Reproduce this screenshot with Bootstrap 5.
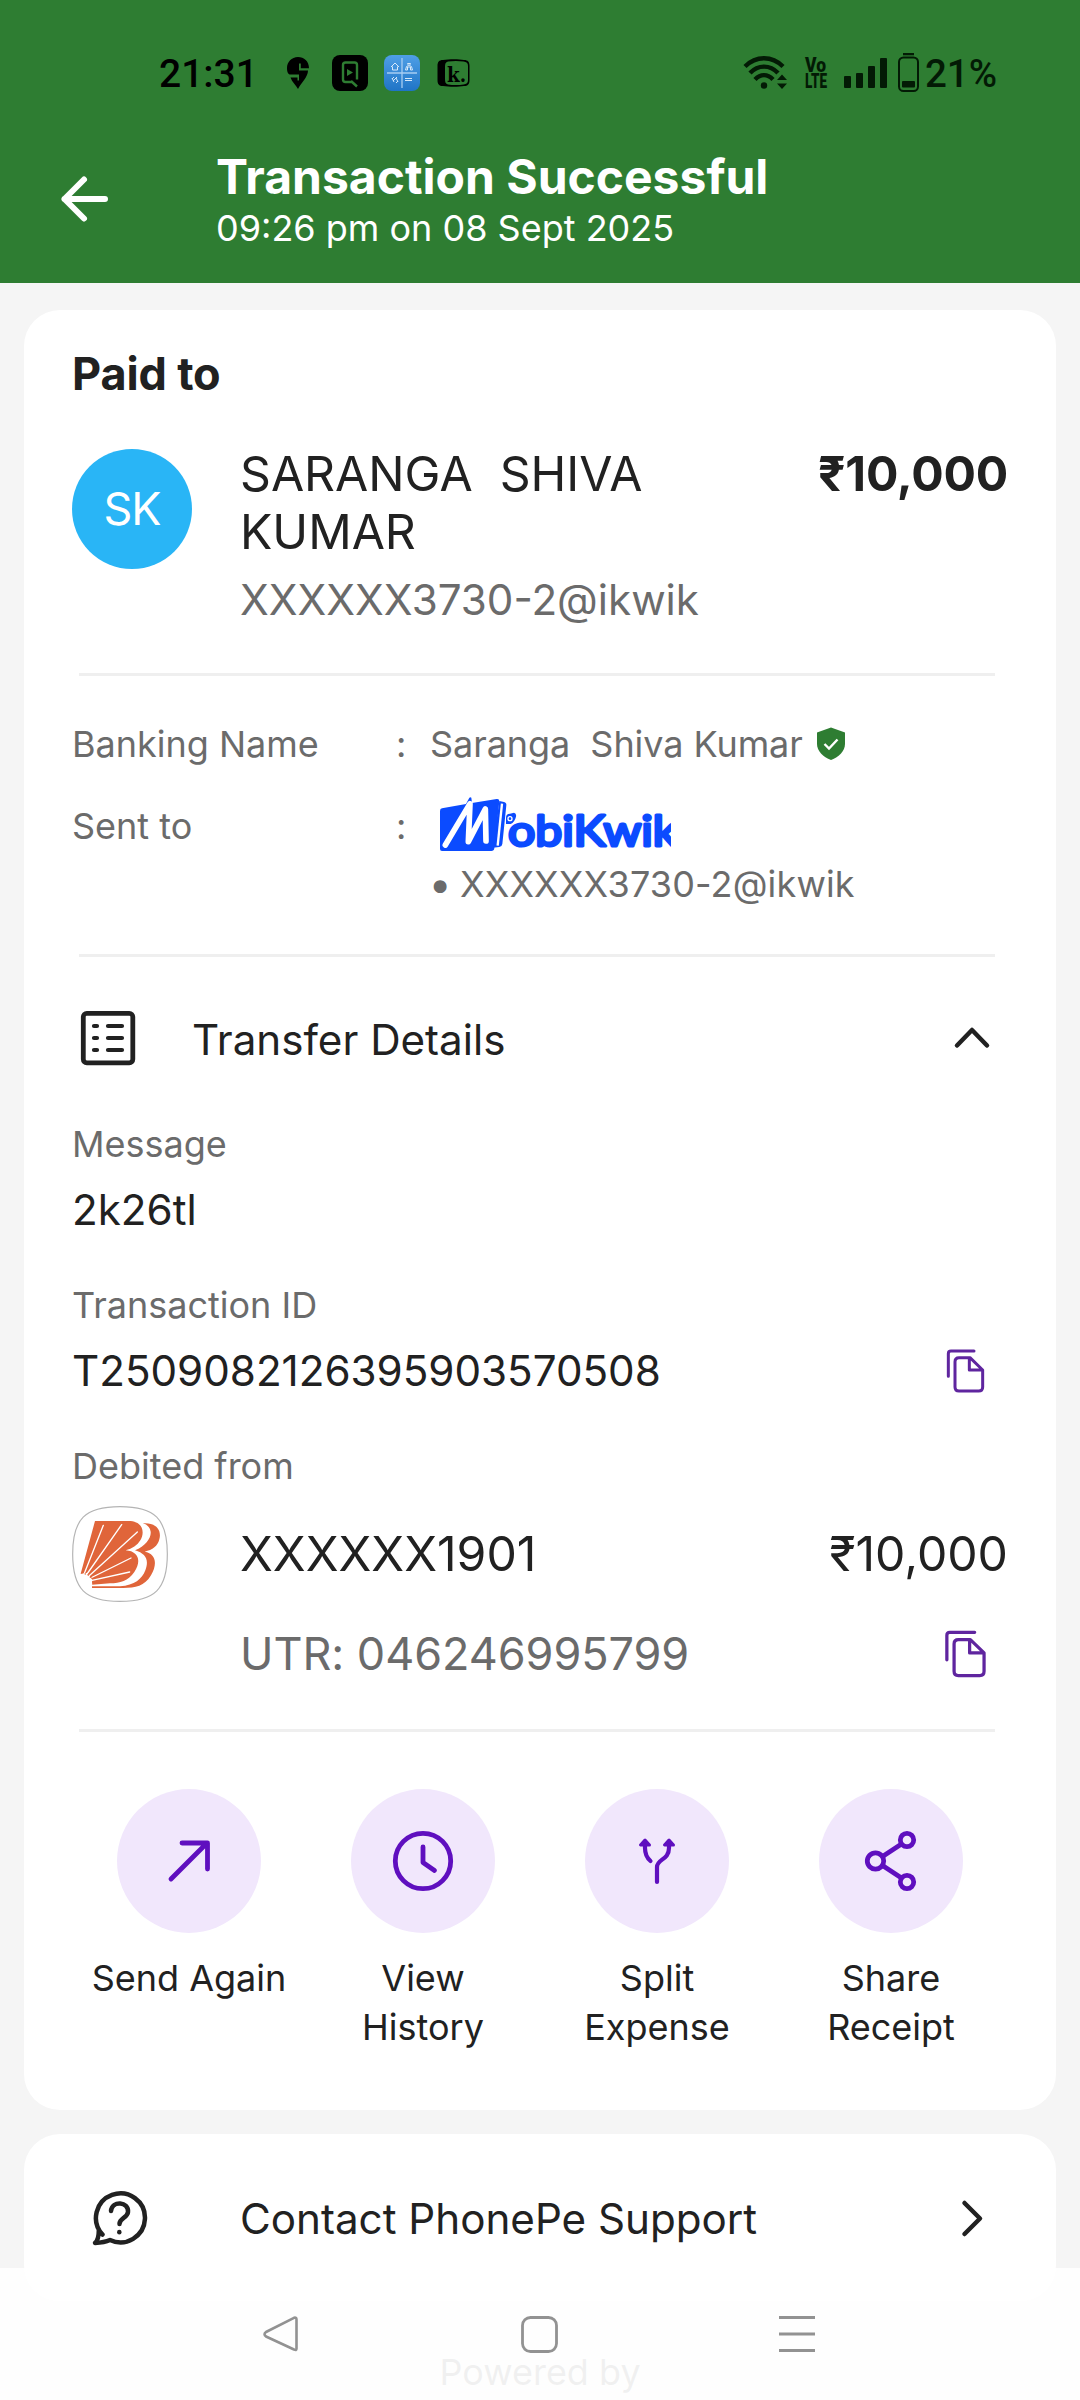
<!doctype html>
<html lang="en">
<head>
<meta charset="utf-8">
<meta name="viewport" content="width=device-width, initial-scale=1">
<title>Transaction Successful</title>
<link href="https://cdn.jsdelivr.net/npm/bootstrap@5.3.0/dist/css/bootstrap.min.css" rel="stylesheet">
<style>
  body { font-family: Inter, "Noto Sans", sans-serif; background: #f5f5f5; color: #212121; height: 2400px; overflow: hidden; }
  svg { display: block; flex: none; }
  .ink-muted { color: #6b6b6b; }
  .app-head { background: #2e7d32; height: 283px; }
  .status-bar { height: 148px; padding: 0 83px 0 159px; font: 500 39px/46px Roboto, sans-serif; color: #000; }
  .status-left svg { margin-bottom: 3px; }
  .status-right { color: #031a05; }
  .status-right svg { margin-bottom: 3px; }
  .head-row { padding-left: 60px; }
  .head-title { font-size: 48px; line-height: 58px; margin-left: 108px; }
  .fs-s { font-size: 36px; line-height: 44px; }
  .fs-m { font-size: 42.150px; line-height: 50px; }
  .fs-l { font-size: 45px; line-height: 54px; }
  .fs-xl { font-size: 48.150px; line-height: 58px; }
  .panel { border: 0; border-radius: 36px; margin: 0 24px; background: #fff; color: inherit; }
  .panel-main { margin-top: 27px; padding: 37px 48px 0; height: 1800px; }
  .rule { height: 3px; background: #efefef; margin: 0 13px 0 7px; flex: none; }
  .avatar { width: 120px; height: 120px; background: #29b5f6; margin-top: 4px; letter-spacing: -1px; flex: none; }
  .col-lead { width: 168px; flex: none; }
  .col-label { width: 324px; flex: none; }
  .col-colon { width: 34px; flex: none; }
  .action-item { width: 234px; flex: none; }
  .action-dot { width: 144px; height: 144px; background: #f1e7fc; color: #5f0fbf; margin-bottom: 21px; }
  .action-text { line-height: 49px; }
  .copy-ico { color: #5f259f; }
  .panel-help { margin-top: 24px; height: 167px; padding: 0 24px 0 58px; }
  .nav-keys { height: 132px; background: rgba(255,255,255,.9); color: #929292; padding: 48px 265px 0 263px; }
</style>
</head>
<body>
<header class="app-head text-white">
  <div class="status-bar d-flex align-items-center justify-content-between">
    <div class="status-left d-flex align-items-center">
      <span style="width:128px">21:31</span>
      <svg width="22" height="32" viewBox="0 0 22 32" fill="#000"><path d="M11 0C4.500 0 0 5 0 11c0 4 1 6.500 3.500 6.500H12v6H10.500v-3H3.500C5 25 9 28 11 32c3-6 10-12 10-18.500H12V6.500h1.800v4.700H22C22 4 17 0 11 0z"/></svg>
      <svg style="margin-left:23px" width="36" height="36" viewBox="0 0 36 36"><rect width="36" height="36" rx="8"/><path d="M20 27h-6.500a2.500 2.500 0 0 1-2.500-2.500V10a2.500 2.500 0 0 1 2.500-2.500h9A2.500 2.500 0 0 1 25 10v14.500M19 26l6 5.500" fill="none" stroke="#2e7d32" stroke-width="2.400"/><path d="M15 14l6 3.500-6 3.500z" fill="#2e7d32"/></svg>
      <svg style="margin-left:16px" width="36" height="36" viewBox="0 0 36 36"><defs><linearGradient id="gb" x2="0" y2="1"><stop stop-color="#4f9fe6"/><stop offset="1" stop-color="#1f74c6"/></linearGradient></defs><rect width="36" height="36" rx="8" fill="url(#gb)"/><path d="M3 18h30M18 3v30" stroke="#a7cdf2" stroke-width="1.300"/><g fill="none" stroke="#d5e8fa" stroke-width="1"><path d="M7 12l4-4 4 4M8.500 11.500V15h5v-3.500M21.500 15l1-3.500 2-1-1-2h3l-1 2 2 1 1 3.500h-2v-3h-3v3z"/><path d="M8 23l2 4M12 23l2 4M10 22l-2 2M14 26l-2 2M9 26l4-4M21 23.500h7M21 25.500h7"/></g></svg>
      <svg style="margin-left:17px" width="33" height="28" viewBox="0 0 33 28"><path fill-rule="evenodd" d="M6 1C12 0 22 0 27 1c4 0 5.500 2 5.500 6v14c0 4-1.500 6-5.500 6-5 1-15 1-21 0-4 0-5.500-2-5.500-6V7C.5 3 2 1 6 1zm5 1.500C8.500 3 8 5 8 8v12c0 3 .5 5 3 5.500 5 .7 11 .7 15.500 0 3-.3 4.500-1.500 4.500-4.500V7c0-3-1.500-4.200-4.500-4.500-4.500-.7-10.500-.7-15.500 0z"/><text x="10" y="22.500" font-family="DejaVu Serif, serif" font-weight="700" font-size="21" textLength="19" lengthAdjust="spacingAndGlyphs">k.</text></svg>
    </div>
    <div class="status-right d-flex align-items-center">
      <svg width="46" height="36" viewBox="0 0 46 36"><g fill="none" stroke="currentColor" stroke-width="4.400"><path d="M2 11.500C13 .5 29 .5 40 11.500"/><path d="M7 18C15 9.500 27 9.500 35 18"/><path d="M12 24.500c5.500-5.800 12.500-5.800 18 0"/></g><circle cx="21" cy="30.500" r="3.200" fill="currentColor"/><path d="M34 25l5-5.500 5 5.500zM34 28.500l5 5.500 5-5.500z" fill="currentColor"/></svg>
      <svg style="margin-left:15px" width="24" height="32" viewBox="0 0 24 32" overflow="visible" font-family="Roboto, sans-serif" font-weight="900" font-size="20" fill="currentColor"><text x="1" y="15" textLength="21" lengthAdjust="spacingAndGlyphs">Vo</text><text x="1" y="31" textLength="22" lengthAdjust="spacingAndGlyphs">LTE</text></svg>
      <svg style="margin-left:16px" width="44" height="32" viewBox="0 0 44 32" fill="currentColor"><rect y="19" width="7" height="12" rx="1"/><rect x="12" y="16" width="7" height="15" rx="1"/><rect x="24" y="9" width="7" height="22" rx="1"/><rect x="36" y="1" width="7" height="30" rx="1"/></svg>
      <svg style="margin-left:10px;margin-right:5px" width="22" height="41" viewBox="0 0 22 41"><rect x="5" y="1" width="11" height="2.300" fill="currentColor"/><rect x="1" y="5.500" width="19" height="33.500" rx="4.500" fill="none" stroke="currentColor" stroke-width="2"/><rect x="4" y="29" width="13" height="6.500" rx="1" fill="currentColor"/></svg>
      <span style="font-size:38.500px">21%</span>
    </div>
  </div>
  <div class="head-row d-flex align-items-center">
    <svg width="48" height="48" viewBox="0 0 48 48" fill="none" stroke="#fff" stroke-width="6" stroke-linecap="round" stroke-linejoin="round"><path d="M45 24H4.500M24 4.500L4.500 24 24 43.500"/></svg>
    <div class="head-title"><div class="fw-bold">Transaction Successful</div><div class="fs-s">09:26 pm on 08 Sept 2025</div></div>
  </div>
</header>

<main>
  <section class="card panel panel-main">
    <div class="fs-l fw-bold" style="letter-spacing:-.15px">Paid to</div>
    <div class="d-flex" style="margin-top:44px">
      <div class="col-lead"><div class="avatar rounded-circle text-white fs-l d-flex align-items-center justify-content-center">SK</div></div>
      <div class="flex-grow-1">
        <div class="fs-xl">SARANGA&nbsp; SHIVA<br>KUMAR</div>
        <div class="fs-m ink-muted" style="margin-top:14px">XXXXXX3730-2@ikwik</div>
      </div>
      <div class="fs-xl fw-bold" style="letter-spacing:-.2px">₹10,000</div>
    </div>
    <div class="rule" style="margin-top:48px"></div>

    <div class="d-flex fs-s ink-muted" style="margin-top:46px">
      <div class="col-label">Banking Name</div><div class="col-colon">:</div>
      <div class="d-flex align-items-center" style="letter-spacing:-.06px">Saranga&nbsp; Shiva Kumar
        <svg style="margin-left:13px" width="30" height="34" viewBox="0 0 30 34"><path d="M15 .5L29 5.500V17c0 7-6 13-14 16C7 30 1 24 1 17V5.500z" fill="#2e7d32"/><path d="M8.500 17l4.500 4.500 8.500-9" fill="none" stroke="#fff" stroke-width="2.400"/></svg>
      </div>
    </div>
    <div class="d-flex fs-s ink-muted" style="margin-top:31px">
      <div class="col-label" style="padding-top:7px">Sent to</div><div class="col-colon" style="padding-top:7px">:</div>
      <div>
        <svg width="241" height="65" viewBox="0 36 723 195">
          <g fill="#0b4bff"><path d="M208 48l14 3q8 2 7 10l-12 116q-1 8-9 9l-20 2z"/><path d="M228 98q0-12 12-12l12-3q8 2 6 12-4 16-16 22h-14z"/><path d="M36 70l72-13 10-19q4-3 6 0l2 16 74-12q8-1 8 7l-15 141q-1 8-9 8H36q-6 0-6-6V78q0-7 6-8z"/></g>
          <path d="M216 56l-13 126" stroke="#fff" stroke-width="7"/>
          <path d="M46 180L120 56l-5 114 51-98 2 96" fill="none" stroke="#fff" stroke-width="17" stroke-linecap="round" stroke-linejoin="round"/>
          <circle cx="240" cy="101" r="6" fill="none" stroke="#fff" stroke-width="4"/>
          <text x="234" y="184" font-family="Lato, sans-serif" font-weight="400" font-size="127" fill="#0b4bff" stroke="#0b4bff" stroke-width="9" stroke-linejoin="round" textLength="508" lengthAdjust="spacingAndGlyphs">obiKwik</text>
        </svg>
        <div style="letter-spacing:.15px"><span class="d-inline-block" style="width:30px;-webkit-text-stroke:1.500px #6b6b6b">•</span>XXXXXX3730-2@ikwik</div>
      </div>
    </div>
    <div class="rule" style="margin-top:48px"></div>

    <div class="d-flex align-items-center" style="margin-top:45px;height:72px">
      <svg width="72" height="72" viewBox="0 0 72 72" fill="none" stroke="currentColor" stroke-width="4.800"><rect x="11.300" y="11.300" width="49.500" height="49.500" rx="3.500"/><path stroke-width="4.200" stroke-linecap="round" d="M22 24h3M22 36h3M22 48h3M36 24h14M36 36h14M36 48h14"/></svg>
      <div class="fs-m flex-grow-1" style="padding:3px 0 0 48px">Transfer Details</div>
      <svg style="margin:0 17px 2px 0" width="38" height="24" viewBox="0 0 38 24" fill="none" stroke="currentColor" stroke-width="4.500" stroke-linecap="round" stroke-linejoin="round"><path d="M4 20.500L19 5l15 15.500"/></svg>
    </div>

    <div class="fs-s ink-muted" style="margin-top:48px">Message</div>
    <div class="fs-m" style="margin-top:19px">2k26tl</div>

    <div class="fs-s ink-muted" style="margin-top:48px">Transaction ID</div>
    <div class="fs-m d-flex justify-content-between align-items-center" style="margin-top:19px"><span>T2509082126395903570508</span>
      <svg class="copy-ico" style="margin-right:18px" width="48" height="48" viewBox="36 50 144 144" fill="none" stroke="currentColor" stroke-width="9" stroke-linejoin="round" stroke-linecap="round"><path d="M55 138V70q0-8 8-8h69M87 82h33l38 37v51q0 12-12 12H87q-12 0-12-12V94q0-12 12-12zM118 84v35h38"/></svg>
    </div>

    <div class="fs-s ink-muted" style="margin-top:48px">Debited from</div>
    <div class="d-flex align-items-center fs-xl" style="margin-top:18px">
      <div class="col-lead">
        <svg width="96" height="96" viewBox="36 47 288 288">
          <path d="M180 49C285 49 322 86 322 191S285 333 180 333 38 296 38 191 75 49 180 49z" fill="#fff" stroke="#b4b4b4" stroke-width="3.500"/>
          <g fill="#e0653a"><path d="M105 92H205c45 0 50 35 36 58-9 15-24 25-44 30 39 3 48 32 26 65-18 26-43 34-73 34l-54 4v-16L62 250z"/><path d="M248 99c38-3 58 18 50 48-5 20-20 32-44 37 34 6 39 36 19 71-19 33-47 38-83 38H96v-5h84c44-3 66-22 76-48 12-32 1-50-31-60 32-14 49-37 47-56-2-13-10-21-24-25z"/></g>
          <g stroke="#fff" stroke-linecap="round" fill="#fff"><path stroke-width="4" d="M72 252L130 105M79 254L185 103M86 258L232 125M92 263l121-60M96 270l113-25"/><path stroke="none" d="M62 251l20-4 14 22 1 14-20 2z"/></g>
          <path d="M64 248l3-8 3 8zM96 274l60-9-58 15z" fill="#e0653a"/>
          <path d="M73 252l3-6 2 7zM81 254l5-5 1 8zM88 261l8-5-2 8z" fill="#e0653a"/>
        </svg>
      </div>
      <span class="flex-grow-1">XXXXXX1901</span><span>₹10,000</span>
    </div>
    <div class="fs-l ink-muted d-flex justify-content-between align-items-center" style="margin:25px 0 0 168px"><span style="letter-spacing:-.06px">UTR: 046246995799</span>
      <svg class="copy-ico" style="margin-right:16px" width="52" height="52" viewBox="36 50 144 144" fill="none" stroke="currentColor" stroke-width="9" stroke-linejoin="round" stroke-linecap="round"><path d="M55 138V70q0-8 8-8h69M87 82h33l38 37v51q0 12-12 12H87q-12 0-12-12V94q0-12 12-12zM118 84v35h38"/></svg>
    </div>
    <div class="rule" style="margin-top:48px"></div>

    <div class="d-flex justify-content-center text-center fs-s" style="margin-top:57px">
      <div class="action-item d-flex flex-column align-items-center"><div class="action-dot rounded-circle"><svg width="144" height="144" fill="none" stroke="currentColor" stroke-width="4.800" stroke-linecap="round" stroke-linejoin="round"><path d="M54 90L90 54M65 54H90.500V80"/></svg></div><div class="action-text">Send Again</div></div>
      <div class="action-item d-flex flex-column align-items-center"><div class="action-dot rounded-circle"><svg width="144" height="144" fill="none" stroke="currentColor" stroke-width="4.800" stroke-linecap="round" stroke-linejoin="round"><circle cx="72" cy="72" r="27.700"/><path d="M72 58v15.500l11.500 8"/></svg></div><div class="action-text">View<br>History</div></div>
      <div class="action-item d-flex flex-column align-items-center"><div class="action-dot rounded-circle"><svg width="144" height="144" fill="none" stroke="currentColor" stroke-width="4.200" stroke-linecap="round" stroke-linejoin="round"><path d="M72 93V78c0-8 12-7 12-19v-4M60 55v4c0 7 2 10 5.500 13"/><path d="M60 51l-4.500 5h9zM84 51l-4.500 5h9z" fill="currentColor" stroke-width="3"/></svg></div><div class="action-text">Split<br>Expense</div></div>
      <div class="action-item d-flex flex-column align-items-center"><div class="action-dot rounded-circle"><svg width="144" height="144" fill="none" stroke="currentColor" stroke-width="4.800"><circle cx="56.500" cy="72" r="8.200"/><circle cx="88" cy="51" r="6.700"/><circle cx="88" cy="93" r="6.700"/><path d="M63.500 67.500L82.500 55M63.500 76.500L82.500 89"/></svg></div><div class="action-text">Share<br>Receipt</div></div>
    </div>
  </section>

  <section class="card panel panel-help flex-row align-items-center">
    <svg style="margin-left:7px" width="60" height="60" viewBox="0 0 60 60" fill="none" stroke="currentColor" stroke-width="4.500" stroke-linecap="round" stroke-linejoin="round"><path d="M13.500 47A24.500 24.500 0 1 1 21 52.500Q15.500 55 6 55.500 10 52 9.800 42" transform="translate(0 -.5)"/><path d="M22 23c1-11 18-9.500 17 1-.5 6-8.500 6-8.500 12"/><path d="M30.300 44v.3"/></svg>
    <span class="fs-m flex-grow-1" style="margin-left:91px;padding-top:2px">Contact PhonePe Support</span>
    <svg style="margin-right:46px" width="28" height="40" viewBox="0 0 28 40" fill="none" stroke="currentColor" stroke-width="4.500" stroke-linecap="round" stroke-linejoin="round"><path d="M6.500 5L22 20.500 6.500 36"/></svg>
  </section>
  <div class="fs-s ink-muted text-center" style="margin-top:49px">Powered by</div>
</main>

<nav class="nav-keys fixed-bottom d-flex justify-content-between align-items-start">
  <svg width="36" height="36" viewBox="0 0 36 36" fill="none" stroke="currentColor" stroke-width="2.600" stroke-linejoin="round"><path d="M33.500 3.500v29q0 2.500-2.500 1L3 20.500q-3-2.300 0-4.500L31 1.800q2.500-.8 2.500 1.700z"/></svg>
  <svg width="37" height="37" viewBox="0 0 37 37" fill="none" stroke="currentColor" stroke-width="2.800"><rect x="1.500" y="1.500" width="34" height="34" rx="8"/></svg>
  <svg width="36" height="37" viewBox="0 0 36 37" stroke="currentColor" stroke-width="3"><path d="M0 1.500h36M0 18h36M0 34.500h36"/></svg>
</nav>
<script src="https://cdn.jsdelivr.net/npm/bootstrap@5.3.0/dist/js/bootstrap.bundle.min.js"></script>
</body>
</html>
